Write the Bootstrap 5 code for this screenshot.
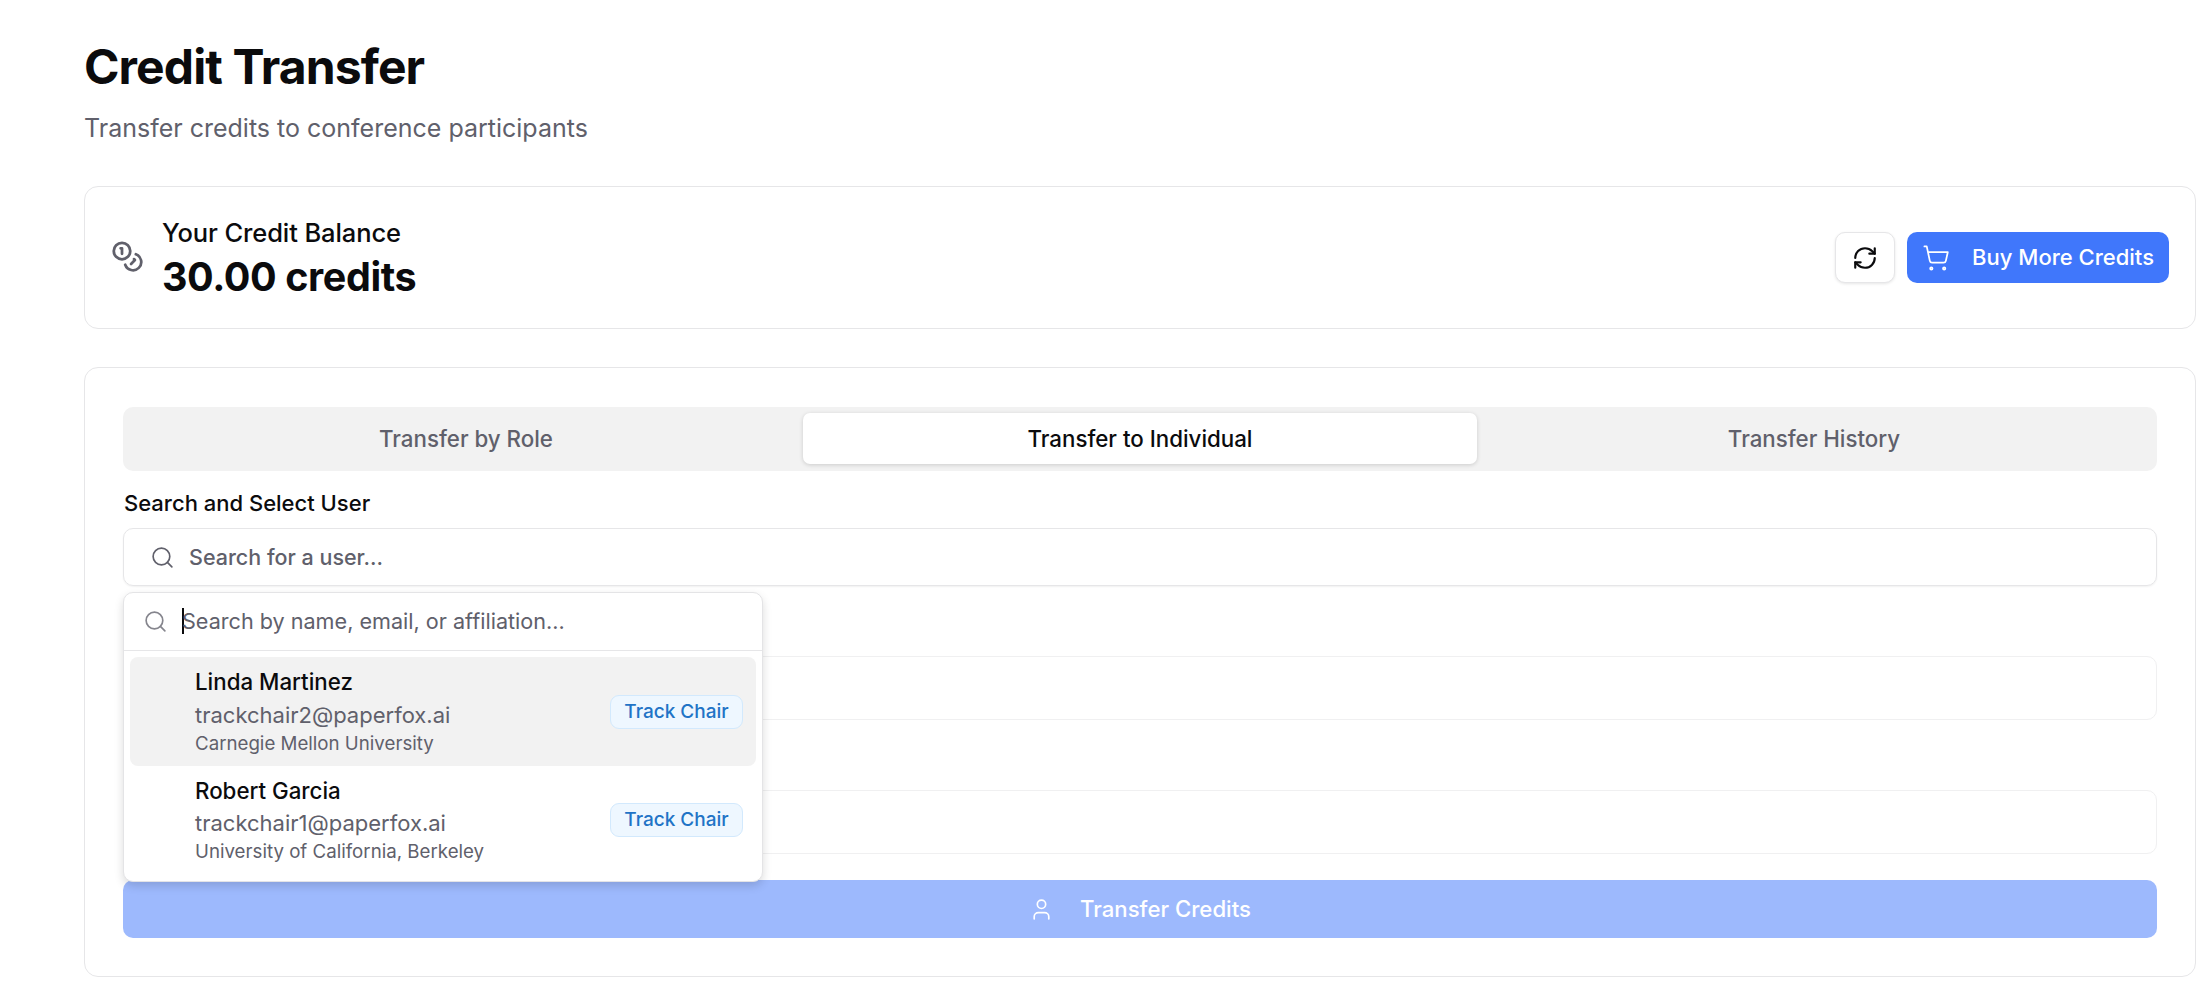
<!doctype html>
<html lang="en"><head><meta charset="utf-8"><title>Credit Transfer</title>
<link href="https://cdn.jsdelivr.net/npm/bootstrap@5.3.0/dist/css/bootstrap.min.css" rel="stylesheet">
<style>
body{font-family:Inter,"Liberation Sans",sans-serif;color:#0b0b0d;background:#fff;padding:0 16px 0 84px;overflow:hidden}
.page-title{font-size:48px;font-weight:700;line-height:56px;letter-spacing:-.9px;margin:39px 0 0;color:#0b0b0d}
.page-sub{font-size:25px;line-height:32px;color:#60606b;margin:17px 0 0}
.pane{border:1.5px solid #e6e6e8;border-radius:14px;background:#fff}
.bal-pane{height:143px;margin-top:42px;padding:0 26px 0 26px}
.coin-ico{width:33px;height:33px;color:#60606b;margin-right:18px;margin-top:-2px}
.bal-label{font-size:25.5px;line-height:32px;font-weight:500;letter-spacing:-.1px;margin-top:1px}
.bal-val{font-size:39.5px;line-height:46px;font-weight:700;letter-spacing:-.4px;margin-top:5px}
.sync-row{gap:12px}
.btn-sync{width:60px;height:51px;padding:0;background:#fff;border:1.5px solid #e6e6e8;border-radius:10px;box-shadow:0 1px 3px rgba(0,0,0,.1);color:#0b0b0d}
.btn-buy{width:262px;height:51px;padding:0 15px 0 15px;background:#4077fb;border:0;border-radius:10px;color:#fff;font-size:22px;font-weight:500}
.btn-buy:hover{background:#4077fb;color:#fff}
.main-pane{height:610px;margin-top:38px;padding:39px 38px 0;position:relative}
.tabs-bar{height:64px;background:#f2f2f2;border-radius:10px;padding:6px}
.tab-item{flex:1 1 0;text-align:center;font-size:22.3px;font-weight:500;color:#60606b;line-height:52px;height:51px;border-radius:7px}
.tab-item.on{background:#fff;color:#0b0b0d;box-shadow:0 1px 4px rgba(0,0,0,.16)}
.fld-label{font-size:22px;font-weight:500;line-height:28px;margin:18px 0 0 1px}
.search-box{height:58px;border:1.5px solid #e6e6e8;border-radius:10px;margin-top:11px;padding-left:26px;box-shadow:0 1px 2px rgba(0,0,0,.06);font-size:21.5px;font-weight:500;color:#60606b}
.box-gap{gap:14px}
.ghost{height:64px;border:1.5px solid #f0f0f1;border-radius:10px}
.ghost-a{margin-top:70px}
.ghost-b{margin-top:70px}
.send-btn{height:58px;margin-top:26px;background:#9db9fd;border-radius:10px;color:#fff;font-size:22.2px;font-weight:500;gap:26px}
.pop{position:absolute;left:38px;top:224px;width:640px;height:290px;background:#fff;border:1.5px solid #e4e4e6;border-radius:10px;box-shadow:0 4px 10px rgba(0,0,0,.14);z-index:5}
.pop-head{height:58px;border-bottom:1.5px solid #e6e6e8;padding-left:19px;font-size:21.6px;color:#60606b;gap:14px}
.caret-bar{display:inline-block;width:2px;height:26px;background:#0b0b0d;margin-right:-2px}
.pop-list{padding:6px}
.person{height:108.5px;border-radius:8px;padding:0 13px 0 65px}
.person.hot{background:#f2f2f2}
.who{padding-top:2px}
.pname{font-size:22.3px;font-weight:500;line-height:30px;margin-top:-1.5px}
.pmail{font-size:22px;line-height:30px;color:#60606b;margin-top:2.5px}
.paff{font-size:18.7px;line-height:25px;color:#60606b;margin-top:1px}
.role-tag{width:133px;height:34px;line-height:31px;margin-top:1px;text-align:center;font-size:19px;font-weight:500;color:#2173c6;background:#eef7ff;border:1.5px solid #d2e9fd;border-radius:9px}
</style></head><body>
<h1 class="page-title">Credit Transfer</h1>
<p class="page-sub">Transfer credits to conference participants</p>

<section class="pane bal-pane d-flex align-items-center justify-content-between">
  <div class="d-flex align-items-center">
    <svg class="coin-ico" viewBox="0 0 24 24" fill="none" stroke="currentColor" stroke-width="2" stroke-linecap="round" stroke-linejoin="round"><circle cx="8" cy="8" r="6"/><path d="M18.09 10.37A6 6 0 1 1 10.34 18"/><path d="M7 6h1v4"/><path d="m16.71 13.88.7.71-2.82 2.82"/></svg>
    <div><div class="bal-label">Your Credit Balance</div><div class="bal-val">30.00 credits</div></div>
  </div>
  <div class="d-flex align-items-center sync-row">
    <button class="btn btn-sync d-flex align-items-center justify-content-center" type="button" aria-label="Refresh">
      <svg width="26" height="26" viewBox="0 0 24 24" fill="none" stroke="currentColor" stroke-width="2" stroke-linecap="round" stroke-linejoin="round"><path d="M3 12a9 9 0 0 1 9-9 9.75 9.75 0 0 1 6.74 2.74L21 8"/><path d="M21 3v5h-5"/><path d="M21 12a9 9 0 0 1-9 9 9.75 9.75 0 0 1-6.74-2.74L3 16"/><path d="M8 16H3v5"/></svg>
    </button>
    <button class="btn btn-buy d-flex align-items-center justify-content-between" type="button">
      <svg width="28" height="28" viewBox="0 0 24 24" fill="none" stroke="currentColor" stroke-width="1.5" stroke-linecap="round" stroke-linejoin="round"><circle cx="8" cy="21" r="1"/><circle cx="19" cy="21" r="1"/><path d="M2.05 2.05h2l2.66 12.42a2 2 0 0 0 2 1.58h9.78a2 2 0 0 0 1.95-1.57l1.65-7.43H5.12"/></svg>
      <span>Buy More Credits</span>
    </button>
  </div>
</section>

<section class="pane main-pane">
  <div class="tabs-bar d-flex">
    <div class="tab-item">Transfer by Role</div>
    <div class="tab-item on">Transfer to Individual</div>
    <div class="tab-item">Transfer History</div>
  </div>
  <div class="fld-label">Search and Select User</div>
  <div class="search-box d-flex align-items-center box-gap">
    <svg width="25" height="25" viewBox="0 0 24 24" fill="none" stroke="currentColor" stroke-width="1.6" stroke-linecap="round" stroke-linejoin="round"><circle cx="11" cy="11" r="8"/><path d="m21 21-4.3-4.3"/></svg>
    <span>Search for a user...</span>
  </div>
  <div class="ghost ghost-a"></div>
  <div class="ghost ghost-b"></div>
  <div class="send-btn d-flex align-items-center justify-content-center">
    <svg width="25" height="25" viewBox="0 0 24 24" fill="none" stroke="currentColor" stroke-width="1.6" stroke-linecap="round" stroke-linejoin="round"><path d="M19 21v-2a4 4 0 0 0-4-4H9a4 4 0 0 0-4 4v2"/><circle cx="12" cy="7" r="4"/></svg>
    <span>Transfer Credits</span>
  </div>

  <div class="pop">
    <div class="pop-head d-flex align-items-center">
      <svg width="25" height="25" viewBox="0 0 24 24" fill="none" stroke="#85858d" stroke-width="1.6" stroke-linecap="round" stroke-linejoin="round"><circle cx="11" cy="11" r="8"/><path d="m21 21-4.3-4.3"/></svg>
      <span class="d-flex align-items-center"><i class="caret-bar"></i>Search by name, email, or affiliation...</span>
    </div>
    <div class="pop-list">
      <div class="person hot d-flex align-items-center justify-content-between">
        <div class="who"><div class="pname">Linda Martinez</div><div class="pmail">trackchair2@paperfox.ai</div><div class="paff">Carnegie Mellon University</div></div>
        <div class="role-tag">Track Chair</div>
      </div>
      <div class="person d-flex align-items-center justify-content-between">
        <div class="who"><div class="pname">Robert Garcia</div><div class="pmail">trackchair1@paperfox.ai</div><div class="paff">University of California, Berkeley</div></div>
        <div class="role-tag">Track Chair</div>
      </div>
    </div>
  </div>
</section>
</body></html>
